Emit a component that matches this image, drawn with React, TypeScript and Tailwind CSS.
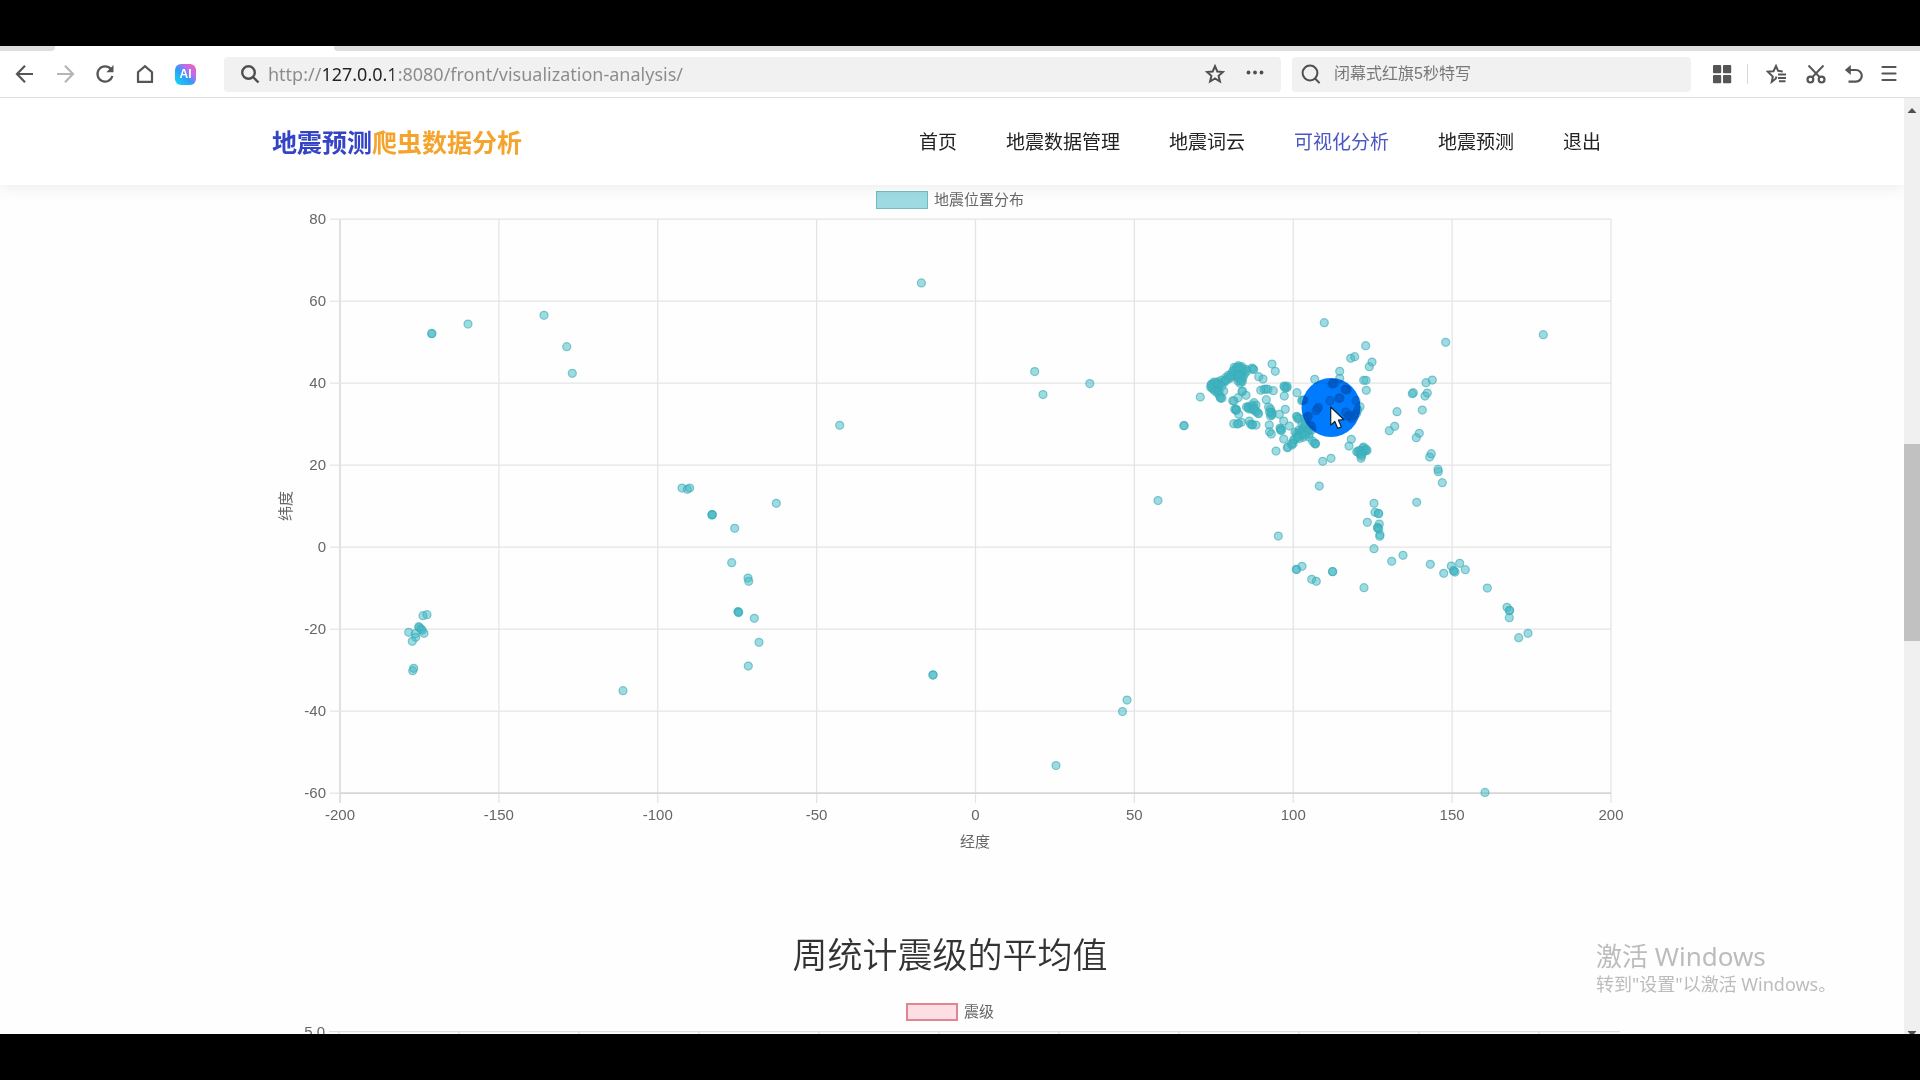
import React from "react";

type Point = [number, number];

const menus = [
  { name: "首页", link: "#home" },
  { name: "地震数据管理", link: "#data" },
  { name: "地震词云", link: "#cloud" },
  { name: "可视化分析", link: "#analysis", active: true },
  { name: "地震预测", link: "#predict" },
  { name: "退出", link: "#logout" },
];

const PLOT = { left: 340, right: 1611, top: 219, bottom: 793 };

const xTicks = [-200, -150, -100, -50, 0, 50, 100, 150, 200];
const yTicks = [80, 60, 40, 20, 0, -20, -40, -60];

// quake positions, already projected to chart coordinates
const points: Point[] = [
  [431.7, 333.7], [431.9, 333.4], [468, 324], [544, 315.3], [566.7, 346.7], [572.3, 373.3],
  [682, 488], [687.3, 489.3], [689.7, 488], [712, 514.7], [712.3, 514.5], [712, 515], [776.3, 503.3],
  [734.7, 528.3], [731.7, 562.7], [748, 578], [748.7, 581.3], [738, 611.5], [738.3, 612], [738.7, 612.6],
  [754.3, 618.3], [759, 642.3], [748.3, 666], [623, 690.7],
  [423, 615.7], [427, 614.7], [418.7, 626.7], [419.4, 627.5], [408.7, 632.3], [415.3, 633.7], [422.3, 630.3],
  [424, 633.3], [421, 629], [415.7, 637.3], [412.3, 641.3], [412.7, 670.7], [413.7, 668.3],
  [921.4, 282.9], [1034.7, 371.5], [1043, 394.5], [1089.8, 383.5], [839.7, 425.3],
  [1184, 425.7], [1184, 425.5], [1158, 500.5], [933, 675], [933, 674.8],
  [1127, 700], [1122.5, 711.5], [1056, 765.5], [1485, 792.4],

  [1276, 451], [1322.7, 461.3], [1331, 458.3], [1319.3, 486], [1374, 503.3], [1375, 512.3], [1378.7, 513.7],
  [1378.3, 513.3], [1367.3, 522.3], [1379.3, 524], [1377.7, 527.3], [1377.5, 528], [1378.7, 529], [1380, 534.7],
  [1379.7, 536.3], [1374, 548.7], [1278.3, 536], [1296.3, 569.3], [1296.6, 569.5], [1302, 566.3],
  [1311.7, 579.3], [1316.3, 581.3], [1332.7, 571.7], [1332.5, 571.5], [1391.7, 561.3], [1403, 555.3], [1364, 587.7],
  [1430.3, 564.3], [1443.7, 573.3], [1451.3, 566], [1459.7, 563.3], [1465.3, 569.7], [1453.5, 570.7], [1454, 571],
  [1455, 572], [1487.3, 588], [1507, 607.3], [1509.7, 610.3], [1509.3, 610.7], [1509.3, 617.7], [1528, 633.3],
  [1518.7, 637.7], [1416.7, 502.3], [1442.3, 482.7], [1438, 469.3], [1438.3, 471.7], [1429.7, 457], [1431.3, 453.7],

  [1365.7, 345.7], [1372, 362], [1369.3, 366.7], [1363.7, 380.3], [1366, 380.3], [1366.3, 390.3], [1445.7, 342.3],
  [1543.3, 334.7], [1432.3, 380], [1426, 382.7], [1413.3, 392.7], [1412.3, 393.7], [1427.3, 393], [1425, 396],
  [1422.3, 410], [1397, 411.7], [1394.7, 426.3], [1389.3, 430.7], [1419.3, 433.3], [1416.3, 437.7],

  [1324.3, 322.7], [1350.7, 358.3], [1354.7, 356.7], [1200.3, 397], [1272, 364], [1275.3, 371.3], [1314.7, 379.3],
  [1339.7, 371.3], [1339.7, 378.3], [1297, 392.7], [1284.3, 396], [1284, 386], [1287, 386], [1285.5, 388],
  [1287, 387.5], [1284.5, 387], [1266.3, 399.7], [1285.3, 409.3], [1279.3, 414.3], [1283.7, 421], [1289.3, 426],
  [1269.3, 425], [1269.5, 431.7], [1271.3, 434], [1283.7, 439], [1287.3, 447.7], [1288, 447], [1260.7, 390.3],
  [1264, 389.3], [1266, 389], [1268, 389.3], [1273.3, 390.7], [1258.7, 376.7], [1263, 379], [1252, 368],
  [1253.7, 369.5], [1253, 369], [1223.7, 391], [1242, 391.7], [1242.5, 391], [1246, 395.3], [1238, 397.7],
  [1232.7, 400.7], [1234, 401], [1234.7, 409.3], [1236, 410.3], [1236.5, 410], [1236, 409], [1238.7, 414.3],
  [1233.7, 423.7], [1237.3, 424], [1241.3, 422.3], [1238.5, 423.5], [1249.3, 421], [1250.5, 424], [1252, 425],
  [1252.6, 424.6], [1256, 425], [1254, 402.7], [1248, 406.7], [1248.5, 407.5], [1251.7, 409], [1251, 407],
  [1254, 407], [1256, 405], [1255, 411], [1258, 413], [1258.5, 413.7], [1256.5, 411.5], [1246.5, 407], [1249, 409],
  [1252, 405], [1254, 409], [1268.6, 407], [1270.5, 409],
  [1271, 412], [1271.5, 414], [1270.5, 416], [1272, 412.5], [1272, 415], [1269.5, 412], [1280, 428], [1281, 429],
  [1280.5, 430], [1281.5, 430.5], [1296.5, 416.3], [1297.5, 417], [1299, 418.5], [1298, 419],
  [1293.3, 443.3], [1292, 445], [1291.5, 443.5], [1295, 439.3], [1293.5, 440], [1298.3, 435], [1296.5, 433.5],
  [1295, 432], [1301.7, 430.7], [1299, 430], [1304, 426.7], [1303, 428], [1306.7, 433.3], [1309, 434],
  [1303.3, 437.3], [1299.5, 438.5], [1311.7, 430], [1308, 428], [1306, 431], [1300, 434], [1303, 433], [1297, 437],
  [1309, 437], [1305, 423], [1310, 425], [1315.3, 444], [1314.5, 443], [1315.5, 443.5], [1312.5, 441],
  [1302, 424], [1306, 426], [1300, 432], [1304, 431], [1308, 431], [1302, 435], [1305, 435], [1298, 437], [1310, 429],
  [1301.7, 400.7], [1302.5, 400], [1349, 446], [1351.3, 439.3], [1356.7, 451.7], [1358, 452], [1360, 454],
  [1363, 448], [1363.5, 447], [1365.7, 450.7], [1367, 450.5], [1361, 458.3], [1361.5, 456], [1363, 452], [1359, 450.5],
  [1364, 450], [1361, 451], [1362, 454], [1366, 449],

  [1211.7, 384], [1210.7, 387.3], [1213.3, 389.3], [1216.7, 390], [1215, 385], [1218.3, 381.7], [1220.7, 384],
  [1221.7, 380], [1225, 381.7], [1225.7, 377.7], [1230, 378.3], [1228.3, 375.3], [1231.7, 373.3], [1235, 370],
  [1235, 374], [1234.3, 367.3], [1238.3, 365.7], [1241.7, 366.7], [1246, 369.3], [1243.3, 371.7], [1238.3, 370],
  [1240, 375], [1243.3, 376.7], [1239.3, 379.3], [1242.3, 381.7], [1240, 383.3], [1220.7, 398.3], [1219.3, 395],
  [1217.3, 392.7], [1236.7, 376.7], [1245, 373.3], [1213, 386], [1217, 386.5], [1216, 388], [1228, 379],
  [1223, 382], [1213.5, 384], [1222, 398], [1220, 397], [1218, 388], [1232, 376], [1240, 367], [1237, 372],
  [1241, 372], [1238, 378], [1238, 381], [1242, 379], [1236, 368], [1219, 384.5], [1215.5, 382.5], [1247, 371],
  [1212, 388], [1215, 391], [1219, 391], [1222, 386], [1226, 380], [1230, 376], [1233, 371], [1240, 370],
  [1243, 369], [1241, 376], [1238, 375], [1241, 381], [1214, 382], [1211, 385], [1217, 384], [1238, 367],

  // around the cursor
  [1333, 383], [1334.3, 383.5], [1332, 384], [1346, 389], [1347, 390], [1345, 389.5], [1330, 400.7], [1338.7, 398.3],
  [1340, 398], [1356, 400.7], [1360, 406.7], [1318.3, 407.3], [1317.5, 409], [1316, 410.7], [1308.3, 416],
  [1307.5, 417], [1305, 418.3], [1345.7, 412], [1350, 415], [1356.7, 413.3], [1304, 400], [1311.7, 426.7],
  [1351.7, 418.3], [1357.7, 410], [1350, 416.5], [1348, 416], [1354, 415],
];

function AddressBar() {
  return (
    <label className="flex items-center h-[35px] flex-1 bg-[#f1f1f1] rounded pl-4 pr-4 text-[#4f4f4f]">
      <svg viewBox="0 0 20 20" className="size-5 shrink-0" fill="none" stroke="currentColor" strokeWidth="2.4">
        <circle cx="8.5" cy="8.5" r="6.3" />
        <path d="M13 13l5.5 5.5" />
      </svg>
      <input
        type="text"
        aria-label="地址"
        defaultValue="http://127.0.0.1:8080/front/visualization-analysis/"
        className="flex-1 ml-2 min-w-0 outline-none text-lg text-transparent bg-clip-text bg-[linear-gradient(90deg,#8a8a8a_54px,#222_54px,#222_125px,#8a8a8a_125px)] font-['Noto_Sans',sans-serif]"
      />
      <button type="button" aria-label="收藏" className="ml-4">
        <svg viewBox="0 0 20 20" className="size-5" fill="none" stroke="currentColor" strokeWidth="2">
          <path d="M10 2.2l2.3 5.3 5.6.5-4.3 3.8 1.3 5.7-4.9-3-4.9 3 1.3-5.7L2.1 8l5.6-.5z" />
        </svg>
      </button>
      <button type="button" aria-label="更多" className="ml-5">
        <svg viewBox="0 0 20 20" className="size-5" fill="currentColor">
          <circle cx="3.5" cy="8.5" r="1.9" />
          <circle cx="10" cy="8.5" r="1.9" />
          <circle cx="16.5" cy="8.5" r="1.9" />
        </svg>
      </button>
    </label>
  );
}

function ToolButton({ label, className, children }: { label: string; className?: string; children: React.ReactNode }) {
  return (
    <button type="button" aria-label={label} className={className}>
      <svg viewBox="0 0 20 20" className="size-5" fill="none" stroke="currentColor" strokeWidth="2.2">
        {children}
      </svg>
    </button>
  );
}

function BrowserBar() {
  return (
    <div className="bg-white border-b border-[#dedede]">
      <div className="flex justify-between h-[5px]">
        <div className="w-[55px] bg-[#dedede] rounded-br" />
        <div className="w-[1586px] max-w-full bg-[#dedede] rounded-bl" />
      </div>
      <div className="flex items-center h-[46px] pl-[15px] pr-[21px] text-[#555]">
        <ToolButton label="后退">
          <path d="M18 10H2.5M10 1.8L2 10l8 8.2" />
        </ToolButton>
        <ToolButton label="前进" className="ml-5 text-[#b5b5b5]">
          <path d="M2 10h15.5M10 1.8l8 8.2-8 8.2" />
        </ToolButton>
        <ToolButton label="刷新" className="ml-5">
          <path d="M16 5.2A7.6 7.6 0 1 0 17.4 12" />
          <path d="M18.5 1v7.2h-7.2z" fill="currentColor" stroke="none" />
        </ToolButton>
        <ToolButton label="主页" className="ml-5">
          <path d="M2 17.8h16M3 17.8V8.2L10 2.2l7 6v9.6" />
        </ToolButton>
        <button
          type="button"
          className="ml-5 mr-[18px] flex items-center justify-center size-[21px] rounded-md bg-[linear-gradient(45deg,#14d0f5_10%,#2f9cf8_45%,#c56be8_70%,#f45cb0)] text-white text-xs font-bold font-['Liberation_Sans',sans-serif]"
        >
          AI
        </button>
        <div className="ml-[10px] flex flex-1">
          <AddressBar />
        </div>
        <label className="ml-[11px] flex items-center h-[35px] w-[399px] bg-[#f1f1f1] rounded pl-[9px] text-[#4f4f4f]">
          <svg viewBox="0 0 20 20" className="size-5 shrink-0" fill="none" stroke="currentColor" strokeWidth="2">
            <circle cx="9" cy="9" r="7.4" />
            <path d="M14 14.5l4.6 4.6" />
          </svg>
          <input
            type="search"
            aria-label="搜索"
            placeholder="闭幕式红旗5秒特写"
            className="ml-[13px] flex-1 min-w-0 outline-none text-base placeholder:text-[#777]"
          />
        </label>
        <ToolButton label="应用" className="ml-[21px]">
          <g fill="currentColor" stroke="none">
            <rect x="1" y="1" width="8.2" height="8.2" rx="1" />
            <rect x="11" y="1" width="8.2" height="8.2" rx="1" />
            <rect x="1" y="11" width="8.2" height="8.2" rx="1" />
            <rect x="11" y="11" width="8.2" height="8.2" rx="1" />
          </g>
        </ToolButton>
        <div className="ml-[15px] w-px h-5 bg-[#d8d8d8]" />
        <ToolButton label="收藏夹" className="ml-[18px]">
          <path
            d="M10.5 12.5l-.8 2.2-3.9 3.1 1-5.3L1.8 7.6l5.7-.4L10 2l2.1 4.8 4.6.6"
            strokeWidth="2"
          />
          <path d="M12 10.5h8M12 14h8M13 17.2h6.5" strokeWidth="1.9" />
        </ToolButton>
        <ToolButton label="截图" className="ml-5">
          <path d="M2.5 1.5L13.5 13M17.5 1.5L6.5 13" strokeWidth="1.9" />
          <circle cx="4.4" cy="15.6" r="2.9" />
          <circle cx="15.6" cy="15.6" r="2.9" />
        </ToolButton>
        <ToolButton label="撤销" className="ml-[18px]">
          <path d="M4 6h8a5.8 5.8 0 0 1 0 11.6H4.5" />
          <path d="M.8 6L6.8 1v10z" fill="currentColor" stroke="none" />
        </ToolButton>
        <ToolButton label="菜单" className="ml-[15px]">
          <path d="M3.5 3h13M3.5 9.5h13M3.5 16h13" strokeLinecap="round" />
        </ToolButton>
      </div>
    </div>
  );
}

function NavBar() {
  return (
    <header className="relative z-10 bg-white shadow-[0_2px_15px_rgba(0,0,0,0.08)]">
      <div className="max-w-[1360px] mx-auto flex items-center justify-between h-[87px] pt-1 pr-[31px]">
        <a href="#home" className="text-[25px] font-bold text-[#3444c6]">
          地震预测<span className="text-[#f4a42c]">爬虫数据分析</span>
        </a>
        <nav className="flex items-center gap-[49px]">
          {menus.map((menu) => (
            <a
              key={menu.name}
              href={menu.link}
              className={`text-[19px] ${menu.active ? "text-[#4a57c4]" : "text-[#222]"}`}
            >
              {menu.name}
            </a>
          ))}
        </nav>
      </div>
    </header>
  );
}

function Legend({ name, swatch }: { name: string; swatch: string }) {
  return (
    <div className="flex items-center justify-center gap-[6px] h-[18px] pr-1 text-[15px] leading-[18px] text-[#666]">
      <span className={`w-[52px] h-[18px] ${swatch}`} />
      {name}
    </div>
  );
}

function ScatterChart() {
  const { left, right, top, bottom } = PLOT;
  const toX = (v: number) => left + ((v + 200) / 400) * (right - left);
  const toY = (v: number) => top + ((80 - v) / 140) * (bottom - top);

  return (
    <svg viewBox="272 209 1360 646" className="block w-full" fontSize="15" fill="#666">
      {xTicks.map((v) => (
        <g key={v}>
          <path d={`M${toX(v)} ${top}V${bottom + 10}`} stroke={v === -200 ? "#cfcfcf" : "#e4e4e4"} strokeWidth="1.25" />
          <text x={toX(v)} y="820" textAnchor="middle">
            {v}
          </text>
        </g>
      ))}
      {yTicks.map((v) => (
        <g key={v}>
          <path d={`M${left - 10} ${toY(v)}H${right}`} stroke="#e4e4e4" strokeWidth="1.25" />
          <text x="326" y={toY(v) + 5} textAnchor="end">
            {v}
          </text>
        </g>
      ))}
      <path d={`M${left} ${bottom}H${right}`} stroke="#cfcfcf" strokeWidth="1.25" />
      <text x="975" y="847" textAnchor="middle">
        经度
      </text>
      <text transform="translate(291 506) rotate(-90)" textAnchor="middle">
        纬度
      </text>
      <g fill="#3eb6c4" fillOpacity="0.5" stroke="#3eabb6" strokeOpacity="0.6" strokeWidth="1.25">
        {points.map(([x, y], i) => (
          <circle key={i} cx={x} cy={y} r="4" />
        ))}
      </g>
      {/* click highlight and pointer */}
      <circle cx="1331" cy="407.5" r="29.5" fill="#007bff" className="mix-blend-multiply" />
      <path
        d="M1330.7 407v18.2l4.1-3.7 3 6.9 3.6-1.5-3-6.9 5.6-.3z"
        fill="#fff"
        stroke="#123"
        strokeWidth="1.2"
        strokeLinejoin="round"
      />
    </svg>
  );
}

function WeeklyChart() {
  const ticks = [0, 1, 2, 3, 4, 5, 6, 7, 8, 9, 10];
  return (
    <svg viewBox="272 1021 1360 60" className="block w-full" fontSize="15" fill="#666">
      <path d="M329 1031.5H1620" stroke="#dcdcdc" strokeWidth="1.25" />
      {ticks.map((i) => (
        <path key={i} d={`M${339 + i * 120} 1031V1081`} stroke="#dcdcdc" strokeWidth="1.25" />
      ))}
      <text x="325" y="1037" textAnchor="end">
        5.0
      </text>
    </svg>
  );
}

function Scrollbar() {
  return (
    <div className="flex flex-col items-center w-4 bg-[#f0f0f0] text-[#505050]">
      <svg viewBox="0 0 16 16" className="size-4 mt-1 shrink-0" fill="currentColor">
        <path d="M3.5 11L8 6l4.5 5z" />
      </svg>
      <div className="flex-[326]" />
      <div className="flex-[197] w-full bg-[#c1c1c1]" />
      <div className="flex-[390]" />
      <svg viewBox="0 0 16 3" className="w-4 h-[3px] shrink-0" fill="currentColor">
        <path d="M3.5 0h9L10 3H6z" />
      </svg>
    </div>
  );
}

export default function App() {
  return (
    <div className="flex flex-col h-screen bg-black py-[46px] font-['Liberation_Sans','Noto_Sans_CJK_SC',sans-serif]">
      <BrowserBar />
      <div className="relative flex flex-1 min-h-0 bg-[#fefefe]">
        <div className="flex-1 min-w-0 overflow-hidden">
          <NavBar />
          <main className="max-w-[1360px] mx-auto">
            <section className="pt-[6px]">
              <Legend name="地震位置分布" swatch="bg-[#9edae1] border border-[#6fbcc4]" />
              <ScatterChart />
            </section>
            <section className="pt-[81px]">
              <h2 className="text-center text-[35px] leading-10 font-[350] text-[#333] pr-1 mb-[27px]">
                周统计震级的平均值
              </h2>
              <Legend name="震级" swatch="bg-[#fddfe3] border-2 border-[#e08593]" />
              <WeeklyChart />
            </section>
          </main>
        </div>
        <Scrollbar />
        <div className="absolute right-[88px] bottom-[37px] w-[236px] text-[#bcbcbc] font-['Noto_Sans','Noto_Sans_CJK_SC',sans-serif] pointer-events-none">
          <p className="text-[26px] leading-[30px]">激活 Windows</p>
          <p className="text-lg leading-[26px] whitespace-nowrap">转到"设置"以激活 Windows。</p>
        </div>
      </div>
    </div>
  );
}
